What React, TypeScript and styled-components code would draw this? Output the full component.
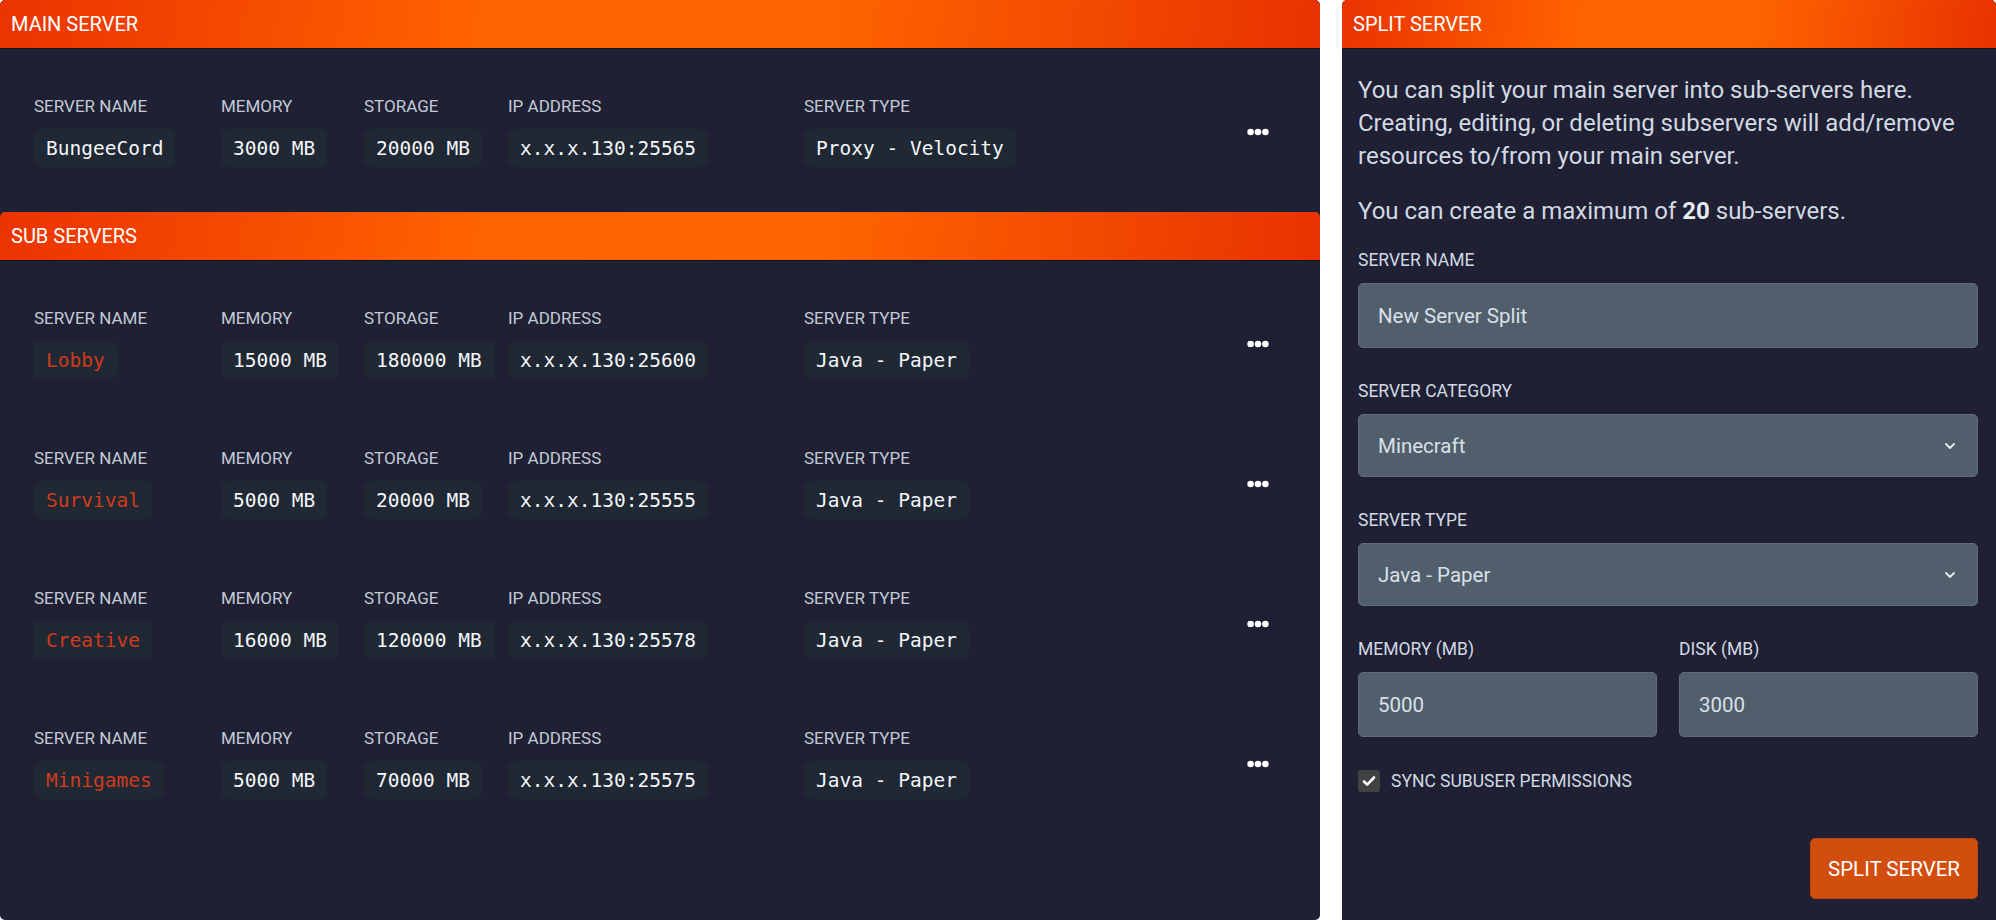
import React from 'react';
import styled, { createGlobalStyle } from 'styled-components';

const GlobalStyle = createGlobalStyle`
  html, body {
    margin: 0;
    padding: 0;
    background: #ffffff;
  }
  body {
    font-family: Roboto, 'Liberation Sans', sans-serif;
  }
  * {
    box-sizing: border-box;
  }
`;

const mainServer = {
  name: 'BungeeCord',
  memory: '3000 MB',
  storage: '20000 MB',
  ip: 'x.x.x.130:25565',
  type: 'Proxy - Velocity',
};

const subServers = [
  { name: 'Lobby', memory: '15000 MB', storage: '180000 MB', ip: 'x.x.x.130:25600', type: 'Java - Paper' },
  { name: 'Survival', memory: '5000 MB', storage: '20000 MB', ip: 'x.x.x.130:25555', type: 'Java - Paper' },
  { name: 'Creative', memory: '16000 MB', storage: '120000 MB', ip: 'x.x.x.130:25578', type: 'Java - Paper' },
  { name: 'Minigames', memory: '5000 MB', storage: '70000 MB', ip: 'x.x.x.130:25575', type: 'Java - Paper' },
];

const Dots = () => (
  <svg width="22" height="8" viewBox="0 0 22 8" fill="#ffffff">
    <circle cx="3.6" cy="4" r="3.3" />
    <circle cx="11" cy="4" r="3.3" />
    <circle cx="18.4" cy="4" r="3.3" />
  </svg>
);

const Chevron = () => (
  <svg width="12" height="8" viewBox="0 0 12 8" fill="none" stroke="#e2e8f0" strokeWidth="2" strokeLinecap="round" strokeLinejoin="round">
    <path d="M2 2l4 4 4-4" />
  </svg>
);

const Check = () => (
  <svg width="14" height="12" viewBox="0 0 14 12" fill="none" stroke="#ffffff" strokeWidth="2.6" strokeLinecap="round" strokeLinejoin="round">
    <path d="M2 6.5l3.2 3.2L12 2.5" />
  </svg>
);

const ServerRow = ({ server, sub }: { server: typeof mainServer; sub?: boolean }) => (
  <Row>
    <Field>
      <Label>Server Name</Label>
      <Value $accent={sub}>{server.name}</Value>
    </Field>
    <Field>
      <Label>Memory</Label>
      <Value>{server.memory}</Value>
    </Field>
    <Field>
      <Label>Storage</Label>
      <Value>{server.storage}</Value>
    </Field>
    <Field>
      <Label>IP Address</Label>
      <Value>{server.ip}</Value>
    </Field>
    <Field>
      <Label>Server Type</Label>
      <Value>{server.type}</Value>
    </Field>
    <MenuButton>
      <Dots />
    </MenuButton>
  </Row>
);

export default function App() {
  return (
    <>
      <GlobalStyle />
      <Page>
        <LeftColumn>
          <Header>Main Server</Header>
          <ServerList $bottom={45}>
            <ServerRow server={mainServer} />
          </ServerList>
          <Header>Sub Servers</Header>
          <ServerList $bottom={0}>
            {subServers.map((s) => (
              <ServerRow key={s.name} server={s} sub />
            ))}
          </ServerList>
        </LeftColumn>

        <RightColumn>
          <Header>Split Server</Header>
          <Form>
            <Text>
              You can split your main server into sub-servers here. Creating, editing, or deleting subservers will
              add/remove resources to/from your main server.
            </Text>
            <Text>
              You can create a maximum of <strong>20</strong> sub-servers.
            </Text>

            <FormGroup>
              <FormLabel>Server Name</FormLabel>
              <Input defaultValue="New Server Split" />
            </FormGroup>

            <FormGroup>
              <FormLabel>Server Category</FormLabel>
              <Select>
                <span>Minecraft</span>
                <Chevron />
              </Select>
            </FormGroup>

            <FormGroup>
              <FormLabel>Server Type</FormLabel>
              <Select>
                <span>Java - Paper</span>
                <Chevron />
              </Select>
            </FormGroup>

            <TwoCols>
              <FormGroup>
                <FormLabel>Memory (MB)</FormLabel>
                <Input defaultValue="5000" />
              </FormGroup>
              <FormGroup>
                <FormLabel>Disk (MB)</FormLabel>
                <Input defaultValue="3000" />
              </FormGroup>
            </TwoCols>

            <CheckRow>
              <CheckBox>
                <Check />
              </CheckBox>
              <CheckLabel>Sync Subuser Permissions</CheckLabel>
            </CheckRow>

            <Actions>
              <SubmitButton>Split Server</SubmitButton>
            </Actions>
          </Form>
        </RightColumn>
      </Page>
    </>
  );
}

const Page = styled.div`
  display: flex;
  gap: 22px;
  width: 1996px;
  height: 920px;
  overflow: hidden;
`;

const LeftColumn = styled.section`
  width: 1320px;
  flex-shrink: 0;
  background: #1f2034;
  border-radius: 5px;
  overflow: hidden;
  height: 920px;
`;

const RightColumn = styled.section`
  flex: 1;
  background: #1f2034;
  border-radius: 5px 5px 0 0;
  overflow: hidden;
`;

const Header = styled.h2`
  margin: 0;
  height: 49px;
  display: flex;
  align-items: center;
  padding: 0 11px;
  font-size: 20px;
  font-weight: 400;
  text-transform: uppercase;
  color: #ffffff;
  border-radius: 5px 5px 0 0;
  border-bottom: 1px solid #141418;
  background: linear-gradient(100deg, #eb3300 0%, #ff6200 36%, #ff6500 62%, #e83200 100%);
`;

const ServerList = styled.div<{ $bottom: number }>`
  display: flex;
  flex-direction: column;
  gap: 69px;
  padding: 47px 0 ${(p) => p.$bottom}px;
`;

const Row = styled.div`
  display: grid;
  grid-template-columns: 187px 143px 144px 296px 1fr auto;
  align-items: center;
  padding: 0 51px 0 34px;
`;

const Field = styled.div`
  display: flex;
  flex-direction: column;
  align-items: flex-start;
  gap: 13px;
`;

const Label = styled.span`
  font-size: 17px;
  line-height: 20px;
  text-transform: uppercase;
  color: #c3cad6;
`;

const Value = styled.span<{ $accent?: boolean }>`
  display: inline-flex;
  align-items: center;
  height: 38px;
  padding: 0 12px;
  border-radius: 6px;
  background: #1f2833;
  font-family: 'DejaVu Sans Mono', 'Liberation Mono', monospace;
  font-size: 19.5px;
  color: ${(p) => (p.$accent ? '#cf3a1c' : '#f3f6fa')};
  white-space: nowrap;
`;

const MenuButton = styled.button`
  border: 0;
  background: none;
  padding: 0;
  display: flex;
  align-items: center;
  cursor: pointer;
`;

const Form = styled.div`
  padding: 25px 18px 0 16px;
  display: flex;
  flex-direction: column;
`;

const Text = styled.p`
  margin: 0 0 22px;
  font-size: 24px;
  line-height: 33px;
  color: #d2d9e3;

  strong {
    color: #e6ebf1;
    font-weight: 700;
  }
`;

const FormGroup = styled.div`
  display: flex;
  flex-direction: column;
  gap: 13px;
  margin-bottom: 33px;
  min-width: 0;
`;

const FormLabel = styled.label`
  font-size: 17.5px;
  line-height: 20px;
  text-transform: uppercase;
  color: #d2d9e3;
`;

const Input = styled.input`
  height: 65px;
  width: 100%;
  padding: 0 19px;
  border: 1px solid #5f6c79;
  border-radius: 5px;
  background: #515f6c;
  color: #d9e0e8;
  font-family: Roboto, 'Liberation Sans', sans-serif;
  font-size: 20.5px;
  outline: none;
`;

const Select = styled.div`
  height: 63px;
  display: flex;
  align-items: center;
  justify-content: space-between;
  padding: 0 21px 0 19px;
  border: 1px solid #5f6c79;
  border-radius: 5px;
  background: #515f6c;
  color: #d9e0e8;
  font-size: 20.5px;
`;

const TwoCols = styled.div`
  display: grid;
  grid-template-columns: 1fr 1fr;
  gap: 22px;
`;

const CheckRow = styled.div`
  display: flex;
  align-items: center;
  gap: 11px;
`;

const CheckBox = styled.span`
  width: 22px;
  height: 22px;
  border-radius: 3px;
  background: #414244;
  display: inline-flex;
  align-items: center;
  justify-content: center;
`;

const CheckLabel = styled.span`
  font-size: 17.5px;
  text-transform: uppercase;
  color: #d2d9e3;
`;

const Actions = styled.div`
  display: flex;
  justify-content: flex-end;
  margin-top: 46px;
`;

const SubmitButton = styled.button`
  height: 61px;
  padding: 0 16px;
  min-width: 168px;
  border: 1px solid #b9440c;
  border-radius: 5px;
  background: #d24e0f;
  color: #ffffff;
  font-family: Roboto, 'Liberation Sans', sans-serif;
  font-size: 20.5px;
  text-transform: uppercase;
  cursor: pointer;
`;
